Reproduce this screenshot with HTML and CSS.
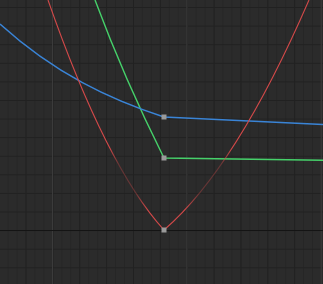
FILE: index.html
```html
<!DOCTYPE html>
<html lang="en">
<head>
    <meta charset="UTF-8">
    <title>Graph Editor</title>
    <link rel="stylesheet" href="styles.css">
</head>
<body>

    <!-- Graph editor view -->
    <div class="graph">
        <svg class="curves" width="323" height="284" viewBox="0 0 323 284">
            <defs>
                <linearGradient id="redFade" gradientUnits="userSpaceOnUse" x1="0" y1="0" x2="0" y2="284">
                    <stop offset="0.52" stop-color="#d24848" stop-opacity="1"/>
                    <stop offset="0.58" stop-color="#d24848" stop-opacity="0.35"/>
                    <stop offset="0.68" stop-color="#d24848" stop-opacity="0.35"/>
                    <stop offset="0.74" stop-color="#d24848" stop-opacity="1"/>
                </linearGradient>
            </defs>

            <!-- Y channel -->
            <path class="curve green" d="M95,0 Q124.5,79 164,158 L323,160.3"/>
            <!-- Z channel -->
            <path class="curve blue" d="M0,24 C54.7,73.5 109.3,99.2 164,117 L323,124.5"/>
            <!-- X channel -->
            <path class="curve red" d="M48,0 Q106,166.2 164,230 Q236.5,167.4 309,0"/>

            <!-- keyframes -->
            <rect class="key" x="161.5" y="114.5" width="5" height="5"/>
            <rect class="key" x="161.5" y="155.5" width="5" height="5"/>
            <rect class="key" x="161.5" y="227.5" width="5" height="5"/>
        </svg>
    </div>

</body>
</html>
```

FILE: styles.css
```css
body {
    margin: 0;
    background: #2b2b2b;
    font-family: "Liberation Sans", Arial, sans-serif;
}

.graph {
    width: 323px;
    height: 284px;
    overflow: hidden;
    background-color: #2b2b2b;
    background-image:
        linear-gradient(#141414, #141414),
        linear-gradient(to right, #3b3b3b 1px, transparent 1px),
        linear-gradient(to right, #212121 1px, transparent 1px),
        linear-gradient(to bottom, #212121 1px, transparent 1px),
        linear-gradient(to right, #262626 1px, transparent 1px);
    background-size: 100% 1px, 134.4px 100%, 26.88px 100%, 100% 18.6px, 8.96px 100%;
    background-position: 0 230px, 52px 0, 25.5px 0, 0 7px, 7.6px 0;
    background-repeat: no-repeat, repeat-x, repeat-x, repeat-y, repeat-x;
}

.curves {
    display: block;
}

.curve {
    fill: none;
}

.green {
    stroke: #46d16a;
    stroke-width: 1.4;
}

.blue {
    stroke: #3a84d6;
    stroke-width: 1.5;
}

.red {
    stroke: url(#redFade);
    stroke-width: 1.1;
}

.key {
    fill: #9a9a9a;
}
```
